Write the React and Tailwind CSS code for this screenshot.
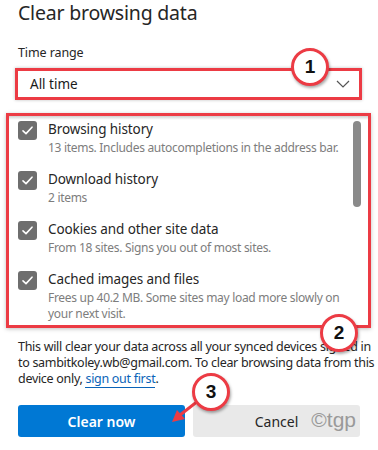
import React from "react";

const RED = "border-[#ec3b44]";

function Check() {
  return (
    <div className="w-[19px] h-[19px] rounded-[3px] bg-[#6e6e6e] flex items-center justify-center shrink-0">
      <svg width="13" height="13" viewBox="0 0 13 13" fill="none">
        <path d="M2 6.8 L5 9.6 L11 3.2" stroke="white" strokeWidth="1.6" strokeLinecap="round" strokeLinejoin="round" />
      </svg>
    </div>
  );
}

function Item({ title, sub }) {
  return (
    <div className="flex gap-[11px] h-[50px]">
      <Check />
      <div className="flex flex-col -mt-[2px]">
        <div className="text-[13.5px] leading-[20px] text-[#262626] tracking-[-0.1px]">{title}</div>
        <div className="text-[12px] leading-[16px] text-[#7d7d7d] mt-[1px] tracking-[-0.3px]">{sub}</div>
      </div>
    </div>
  );
}

function Badge({ n, className }) {
  return (
    <div
      className={
        "absolute w-[38px] h-[38px] rounded-full bg-white border-[3px] border-[#ec3b44] flex items-center justify-center shadow-[1px_2px_3px_rgba(0,0,0,0.35)] text-[19px] font-bold text-[#111] " +
        className
      }
      style={{ fontFamily: "'Liberation Sans', Arial, sans-serif" }}
    >
      {n}
    </div>
  );
}

export default function App() {
  return (
    <div
      className="relative w-[378px] h-[450px] overflow-hidden bg-white text-[#262626]"
      style={{ fontFamily: "'Noto Sans', 'Open Sans', sans-serif" }}
    >
      <div className="pl-[18px] pt-[0px] text-[19.5px] leading-[26px] tracking-[-0.2px] text-[#262626]">Clear browsing data</div>
      <div className="pl-[18px] mt-[18px] text-[12.5px] leading-[18px] tracking-[-0.1px] text-[#262626]">Time range</div>
      <div className={"ml-[15px] mt-[6px] w-[347px] h-[32px] border-[3px] " + RED + " flex items-center justify-between pl-[12px] pr-[9px] shadow-[0_0_3px_rgba(0,0,0,0.25)]"}>
        <span className="text-[13.5px] text-[#1a1a1a]">All time</span>
        <svg width="14" height="8" viewBox="0 0 14 8" fill="none">
          <path d="M1 1 L7 7 L13 1" stroke="#555" strokeWidth="1.2" />
        </svg>
      </div>
      <div className={"relative ml-[6px] mt-[13px] w-[365px] h-[215px] border-[3px] " + RED + " overflow-hidden shadow-[0_1px_4px_rgba(0,0,0,0.25)]"}>
        <div className="absolute inset-x-0 top-0 h-[4px] bg-gradient-to-b from-[#d0d0d0] to-transparent" />
        <div className="flex flex-col pl-[9px] pt-[5px]">
          <Item title="Browsing history" sub="13 items. Includes autocompletions in the address bar." />
          <Item title="Download history" sub="2 items" />
          <Item title="Cookies and other site data" sub="From 18 sites. Signs you out of most sites." />
          <div className="flex gap-[11px]">
            <Check />
            <div className="flex flex-col -mt-[2px] w-[300px]">
              <div className="text-[13.5px] leading-[20px] text-[#262626] tracking-[-0.1px]">Cached images and files</div>
              <div className="text-[12px] leading-[16px] text-[#7d7d7d] mt-[1px] tracking-[-0.3px]">
                Frees up 40.2 MB. Some sites may load more slowly on your next visit.
              </div>
            </div>
          </div>
        </div>
        <div className="absolute left-[344px] top-[5px] w-[8px] h-[86px] rounded-full bg-[#8a8a8a]" />
      </div>
      <div className="pl-[18px] mt-[11px] text-[12.5px] leading-[16px] tracking-[-0.3px] text-[#262626] whitespace-nowrap">
        This will clear your data across all your synced devices signed in
        <br />
        to sambitkoley.wb@gmail.com. To clear browsing data from this
        <br />
        device only, <span className="text-[#0a63b8] border-b border-[#0a63b8]">sign out first</span>.
      </div>
      <div className="flex gap-[8px] px-[18px] mt-[18px]">
        <div className="w-[168px] h-[32px] rounded-[3px] bg-[#0078d4] text-white text-[14px] font-semibold flex items-center justify-center">
          Clear now
        </div>
        <div className="relative w-[168px] h-[32px] rounded-[3px] bg-[#e9e9e9] text-[#262626] text-[14px] flex items-center justify-center">
          Cancel
          <span className="absolute right-[4px] top-[1px] text-[21px] leading-[28px] text-[#9a9a9a]" style={{ fontFamily: "'Liberation Sans', Arial, sans-serif" }}>©tgp</span>
        </div>
      </div>

      <Badge n="1" className="left-[291px] top-[48px]" />
      <Badge n="2" className="left-[320px] top-[314px]" />
      <svg className="absolute left-[168px] top-[395px]" width="40" height="32" viewBox="0 0 40 32">
        <path d="M30 6 L12 20" stroke="#ec3b44" strokeWidth="3" />
        <path d="M4 27 L9 15 L17 24 Z" fill="#ec3b44" />
      </svg>
      <Badge n="3" className="left-[192px] top-[373px]" />
    </div>
  );
}
